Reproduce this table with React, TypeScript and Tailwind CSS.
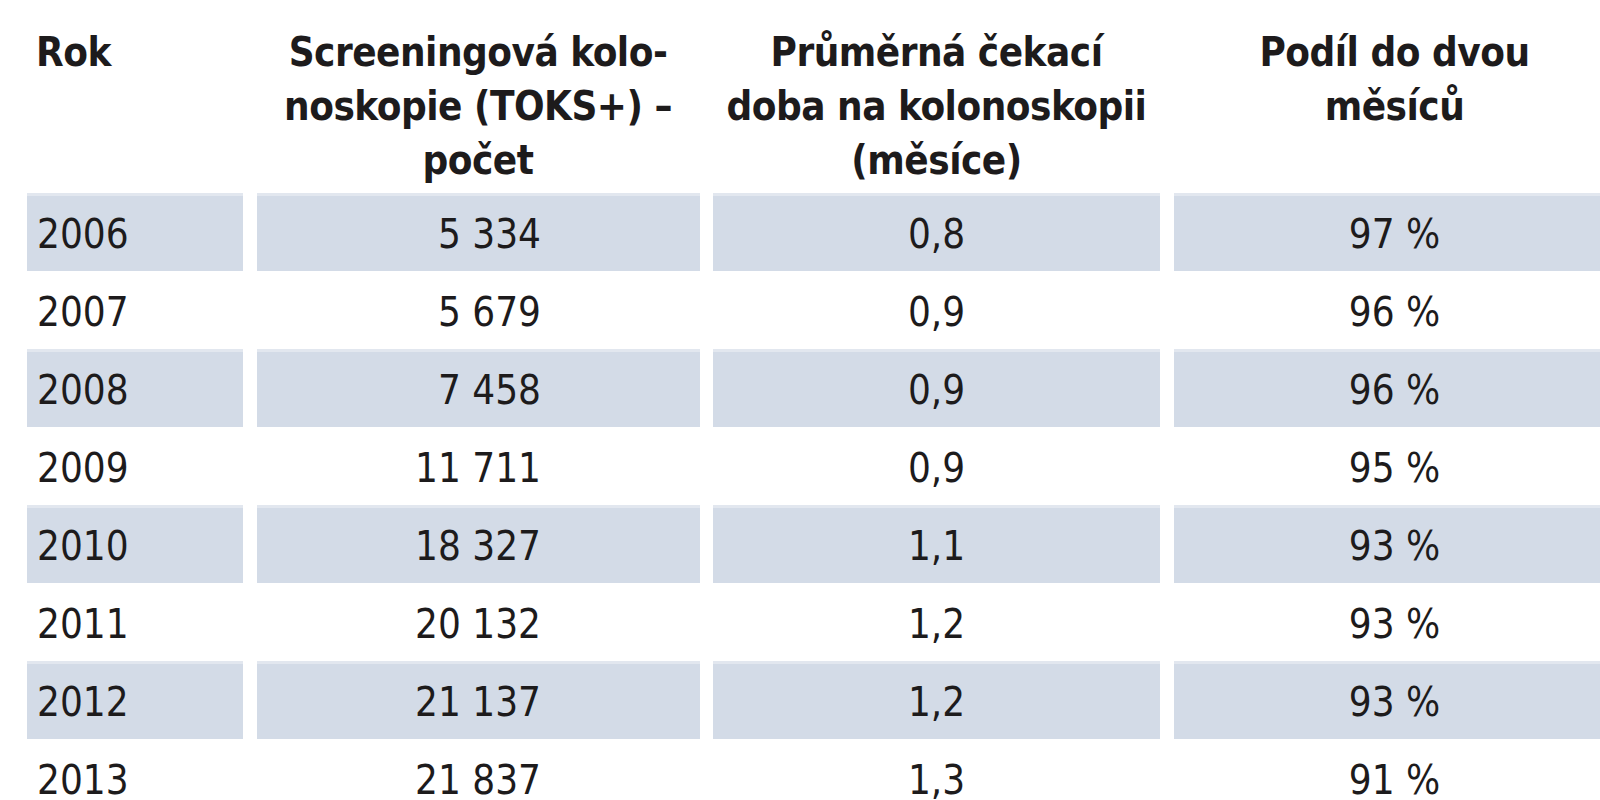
const rows = [
  { year: "2006", count: "5 334", wait: "0,8", share: "97 %" },
  { year: "2007", count: "5 679", wait: "0,9", share: "96 %" },
  { year: "2008", count: "7 458", wait: "0,9", share: "96 %" },
  { year: "2009", count: "11 711", wait: "0,9", share: "95 %" },
  { year: "2010", count: "18 327", wait: "1,1", share: "93 %" },
  { year: "2011", count: "20 132", wait: "1,2", share: "93 %" },
  { year: "2012", count: "21 137", wait: "1,2", share: "93 %" },
  { year: "2013", count: "21 837", wait: "1,3", share: "91 %" },
];

const grid =
  "grid grid-cols-[216px_443px_447px_442px] gap-x-[13.5px] w-[1615px]";

const App = () => {
  return (
    <div className="w-[1600px] h-[800px] overflow-hidden bg-white text-[#1d1b1c] font-['DejaVu_Sans_Condensed','DejaVu_Sans',sans-serif] text-[40px]">
      <div className="pl-[27px]">
        {/* Header */}
        <div className={`${grid} h-[193px] pt-[25px] font-bold leading-[54px] tracking-[-0.5px]`}>
          <div className="pl-[9px]">Rok</div>
          <div className="text-center whitespace-nowrap">
            Screeningová kolo-
            <br />
            noskopie (TOKS+) –
            <br />
            počet
          </div>
          <div className="text-center whitespace-nowrap">
            Průměrná čekací
            <br />
            doba na kolonoskopii
            <br />
            (měsíce)
          </div>
          <div className="text-center whitespace-nowrap">
            Podíl do dvou
            <br />
            měsíců
          </div>
        </div>

        {/* Body */}
        {rows.map((r, i) => {
          const band = i % 2 === 0;
          const cell = band
            ? "bg-[#d3dbe7] border-t-[3px] border-[#e2e7ef]"
            : "border-t-[3px] border-transparent";
          return (
            <div key={r.year} className={`${grid} h-[78px] leading-none`}>
              <div className={`${cell} flex items-center pl-[10px]`}>{r.year}</div>
              <div className={`${cell} flex items-center justify-center`}>
                <span className="inline-block w-[126px] text-right">{r.count}</span>
              </div>
              <div className={`${cell} flex items-center justify-center`}>{r.wait}</div>
              <div className={`${cell} flex items-center justify-center`}>{r.share}</div>
            </div>
          );
        })}
      </div>
    </div>
  );
};

export default App;
